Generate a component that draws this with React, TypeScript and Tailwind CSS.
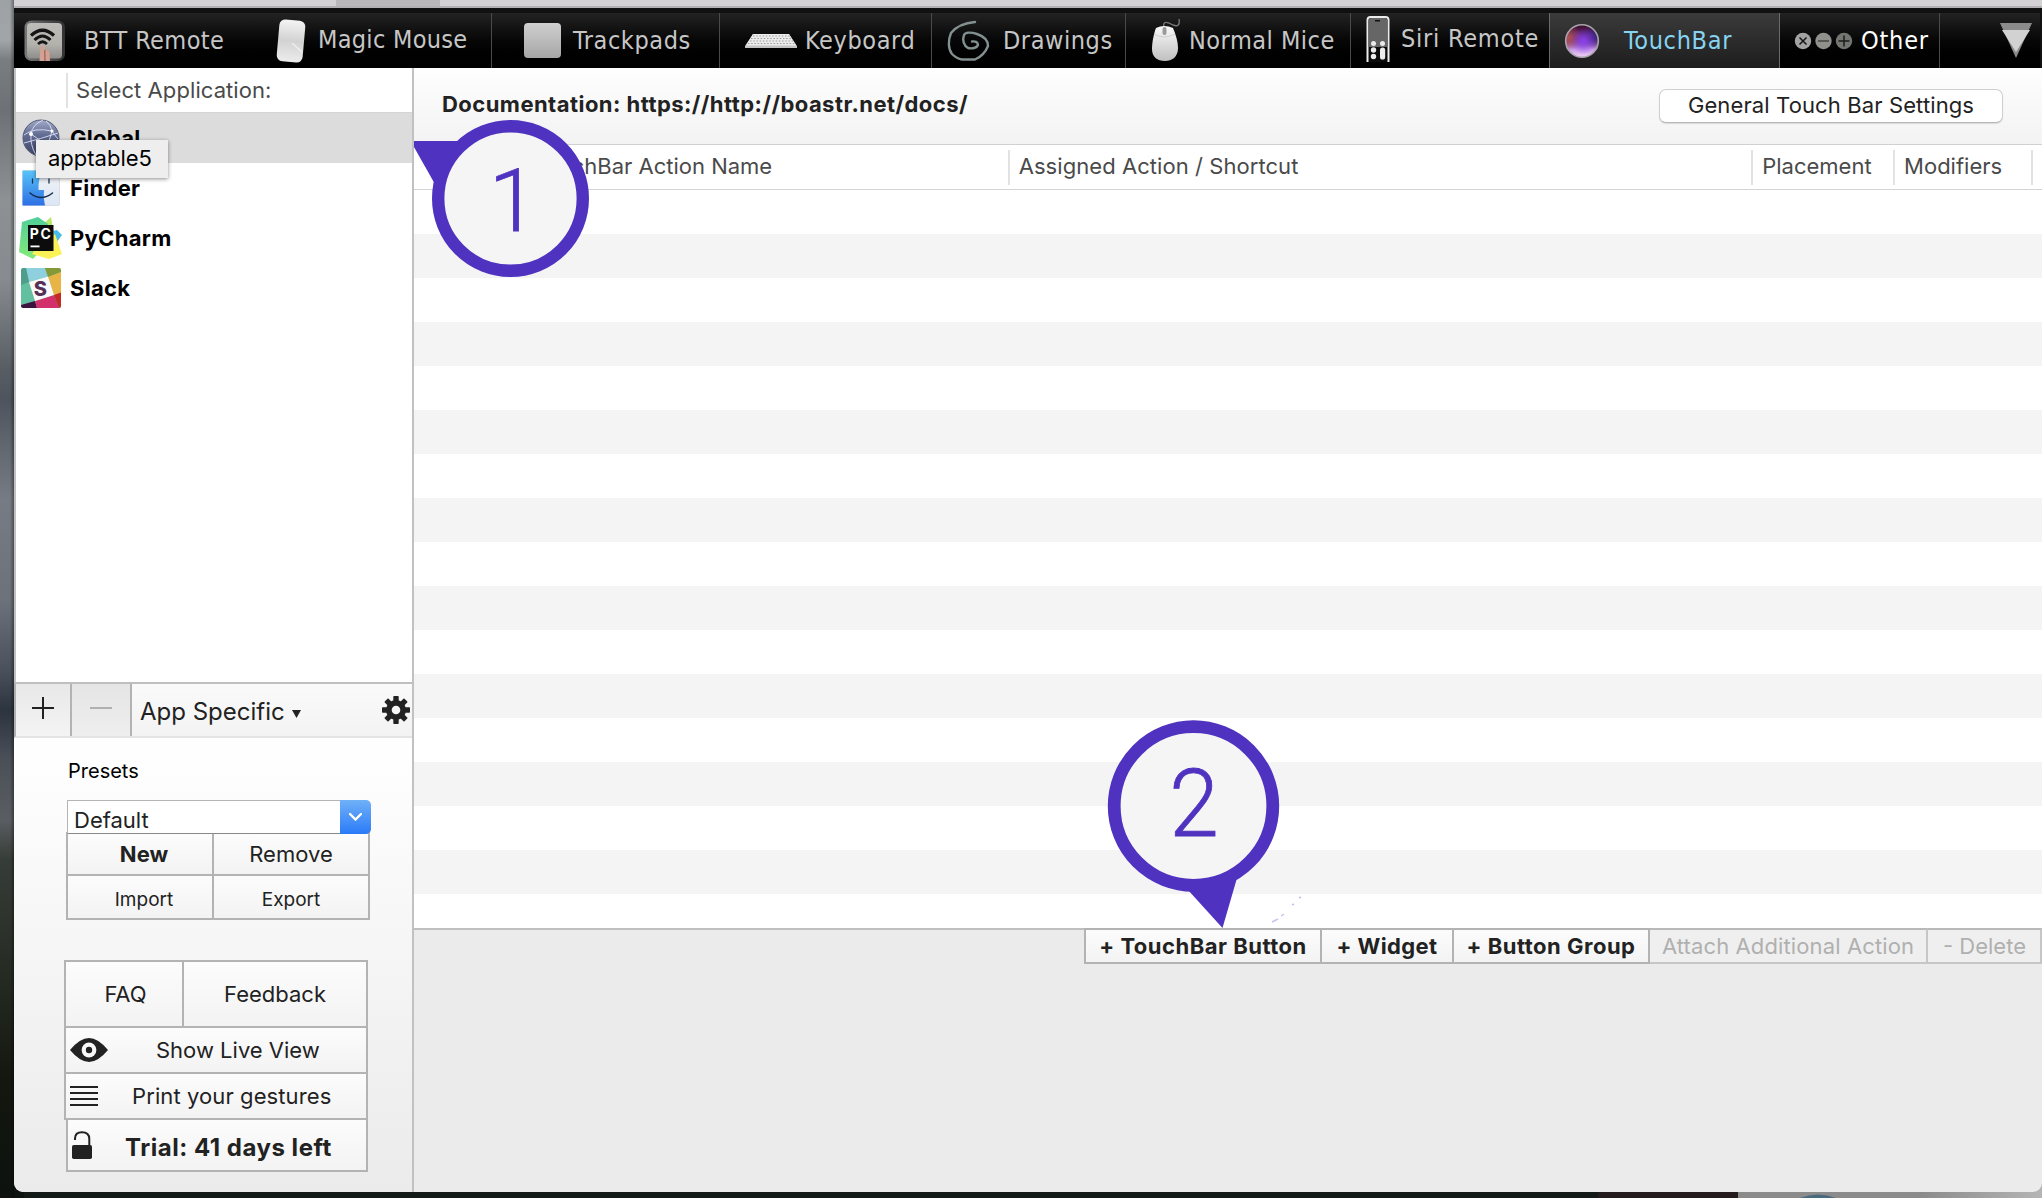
import type { ReactNode } from "react";

const sans = "font-['Inter','Liberation_Sans',sans-serif]";

function Tab({ children, className = "from-[#232323] to-black" }: { children: ReactNode; className?: string }) {
  return <div className={`flex shrink-0 items-center bg-linear-to-b ${className}`}>{children}</div>;
}

function RemoteIcon() {
  return (
    <svg width="42" height="42" viewBox="0 0 42 42" className="shrink-0">
      <defs>
        <linearGradient id="rm" x1="0" y1="0" x2="0" y2="1">
          <stop offset="0" stopColor="#bdbcb8" />
          <stop offset="0.600" stopColor="#b3b2ad" />
          <stop offset="1" stopColor="#8e8d89" />
        </linearGradient>
        <linearGradient id="rf" x1="0" y1="0" x2="1" y2="0">
          <stop offset="0" stopColor="#77787a" />
          <stop offset="1" stopColor="#303133" />
        </linearGradient>
      </defs>
      <rect x="0.500" y="0.500" width="40.500" height="40.500" rx="7" fill="url(#rf)" />
      <rect x="3" y="3" width="35" height="35.500" rx="4" fill="url(#rm)" />
      <g fill="none" stroke="#151515">
        <path d="M7 15.500 Q18.500 5 30 15.500" strokeWidth="3.200" />
        <path d="M10.500 20 Q18.500 12 26.500 20" strokeWidth="3" />
        <path d="M14 24 Q18.500 19.500 23 24" strokeWidth="2.600" />
      </g>
      <path d="M15.500 41 L16.500 27 q2-3 4 0 L21 31 q3-2.500 4.500 1 L26 41 Z" fill="#d3a193" />
      <path d="M20.800 30 L21 41" stroke="#8c5347" strokeWidth="1" />
    </svg>
  );
}

function MagicMouseIcon() {
  return (
    <svg width="32" height="46" viewBox="0 0 32 46" className="shrink-0">
      <defs>
        <linearGradient id="mm" x1="0" y1="0" x2="0" y2="1">
          <stop offset="0" stopColor="#f4f4f4" />
          <stop offset="0.500" stopColor="#d2d2d2" />
          <stop offset="1" stopColor="#ececec" />
        </linearGradient>
      </defs>
      <rect x="3" y="2" width="26" height="42" rx="6" fill="url(#mm)" transform="rotate(5 16 23)" />
      <path d="M17 25 L27 34" stroke="#f6efec" strokeWidth="1.500" opacity="0.900" />
    </svg>
  );
}

function KeyboardIcon() {
  return (
    <svg width="52" height="16" viewBox="0 0 52 16" className="shrink-0">
      <path d="M8 1 H44 L52 13 V15 H0 V13 Z" fill="#c4c4c4" />
      <path d="M8 1 H44 L51 12.500 H1 Z" fill="#ececec" />
      <path d="M8 3 H45 M6 5.500 H46.500 M5 8 H48 M3 10.500 H49.500" stroke="#9a9a9a" strokeWidth="1" strokeDasharray="1.500 1.700" />
    </svg>
  );
}

function SpiralIcon() {
  return (
    <svg width="44" height="42" viewBox="0 0 44 42" className="shrink-0" fill="none" stroke="#82908f" strokeWidth="2.400" strokeLinecap="round" strokeLinejoin="round">
      <path d="M29 2 C17 3 9 8 5 13 C2 20 2 29 6 34 C10 38 12 39 16 39.500 L29 39.500 C35 37 40 31 42 26 C42 20 37 16 31 14 C25 12 19 12 18 15 C16 20 18 26 22 28 C26 29 31 28 32 25 C32 22 29 21 26 21.500" />
    </svg>
  );
}

function MouseIcon() {
  return (
    <svg width="30" height="46" viewBox="0 0 30 46" className="shrink-0">
      <defs>
        <linearGradient id="nm" x1="0" y1="0" x2="0" y2="1">
          <stop offset="0" stopColor="#fafafa" />
          <stop offset="1" stopColor="#c0c0c0" />
        </linearGradient>
      </defs>
      <path d="M13 10 C11 2 17 4 22 7 C27 9 29 7 28 1" fill="none" stroke="#777" strokeWidth="1.400" />
      <path d="M5 10 Q13 6 22 10 C25 17 27 24 27 30 C27 39 21 43 14 43 C6 43 1 39 1 31 C1 24 3 15 5 10 Z" fill="url(#nm)" />
      <path d="M3 16 Q13 22 24 16" fill="none" stroke="#cfcfcf" strokeWidth="1" />
      <rect x="11.500" y="9" width="4" height="8" rx="2" fill="#9a9a9a" />
    </svg>
  );
}

function SiriIcon() {
  return (
    <svg width="24" height="46" viewBox="0 0 24 46" className="mb-[3px] shrink-0">
      <path d="M1.500 46 V4 Q1.500 1 4.500 1 H19.500 Q22.500 1 22.500 4 V46" fill="#0b0b0b" stroke="#ececec" strokeWidth="2" />
      <path d="M2.500 31 V4 Q2.500 2 5 2 H19 Q21.500 2 21.500 4 V31 Z" fill="#666" />
      <rect x="9" y="4" width="5" height="1.500" fill="#111" />
      <g fill="#ececec">
        <circle cx="7.500" cy="27.500" r="2.500" />
        <circle cx="16.500" cy="27.500" r="2.500" />
        <circle cx="7.500" cy="34" r="2.700" />
        <circle cx="7.500" cy="40.500" r="2.700" />
        <rect x="14" y="31.500" width="5.200" height="12" rx="2.600" />
      </g>
    </svg>
  );
}

function OrbIcon() {
  return (
    <svg width="36" height="36" viewBox="0 0 36 36" className="shrink-0">
      <defs>
        <linearGradient id="ob" x1="0" y1="0" x2="0" y2="1">
          <stop offset="0" stopColor="#3a0f2c" />
          <stop offset="0.450" stopColor="#6a2a78" />
          <stop offset="0.750" stopColor="#c79ae8" />
          <stop offset="1" stopColor="#f0d4f4" />
        </linearGradient>
        <radialGradient id="ob2" cx="0.550" cy="0.500" r="0.400">
          <stop offset="0" stopColor="#8a3ff0" />
          <stop offset="1" stopColor="#8a3ff0" stopOpacity="0" />
        </radialGradient>
        <radialGradient id="ob3" cx="0.100" cy="0.400" r="0.400">
          <stop offset="0" stopColor="#b0524e" />
          <stop offset="1" stopColor="#b0524e" stopOpacity="0" />
        </radialGradient>
        <radialGradient id="ob4" cx="0.900" cy="0.350" r="0.400">
          <stop offset="0" stopColor="#3b2680" />
          <stop offset="1" stopColor="#3b2680" stopOpacity="0" />
        </radialGradient>
      </defs>
      <circle cx="18" cy="18" r="16.300" fill="url(#ob)" />
      <circle cx="18" cy="18" r="16.300" fill="url(#ob3)" />
      <circle cx="18" cy="18" r="16.300" fill="url(#ob4)" />
      <circle cx="18" cy="18" r="16.300" fill="url(#ob2)" stroke="#a9a3ab" strokeWidth="1.600" />
    </svg>
  );
}

function OtherIcon() {
  return (
    <svg width="60" height="18" viewBox="0 0 60 18" className="shrink-0">
      <circle cx="9" cy="9" r="8.200" fill="#a3a3a3" />
      <circle cx="29.500" cy="9" r="8.200" fill="#90908c" />
      <circle cx="50" cy="9" r="8.200" fill="#747672" />
      <path d="M5.500 5.500 l7 7 m0-7 l-7 7" stroke="#151515" strokeWidth="1.500" />
      <path d="M24 9 h11" stroke="#44443f" strokeWidth="1.500" />
      <path d="M44.500 9 h11 M50 3.500 v11" stroke="#1d1d1b" strokeWidth="1.500" />
    </svg>
  );
}

function GlobeIcon() {
  return (
    <svg width="38" height="38" viewBox="0 0 38 38" className="shrink-0">
      <defs>
        <linearGradient id="gl" x1="0" y1="0" x2="0" y2="1">
          <stop offset="0" stopColor="#a3abc8" />
          <stop offset="0.400" stopColor="#646d94" />
          <stop offset="1" stopColor="#3d4565" />
        </linearGradient>
      </defs>
      <circle cx="19" cy="19" r="18" fill="url(#gl)" stroke="#555b74" strokeWidth="1" />
      <path
        d="M2 16 Q12 8 30 12 Q34 18 36 20 M9 15 Q8 26 14 36 M21 1 Q10 6 9 15 Q18 20 28 31 M30 12 Q28 24 20 36 M24 2 Q29 6 30 12 M2 24 Q18 20 36 14"
        fill="none"
        stroke="#dfe6fb"
        strokeWidth="1"
        opacity="0.850"
      />
      <circle cx="9" cy="15" r="2" fill="#fff" />
      <circle cx="30" cy="12" r="1.600" fill="#fff" />
    </svg>
  );
}

function FinderIcon() {
  return (
    <svg width="38" height="36" viewBox="0 0 38 36" className="shrink-0">
      <defs>
        <linearGradient id="fb" x1="0" y1="0" x2="0" y2="1">
          <stop offset="0" stopColor="#58c4f8" />
          <stop offset="1" stopColor="#2e6fe4" />
        </linearGradient>
        <linearGradient id="fw" x1="0" y1="0" x2="0" y2="1">
          <stop offset="0" stopColor="#f2f4f7" />
          <stop offset="1" stopColor="#dce6f4" />
        </linearGradient>
      </defs>
      <rect x="0.500" y="0.500" width="37" height="35" rx="1.500" fill="url(#fw)" stroke="#c8cfd8" strokeWidth="0.600" />
      <path d="M0.500 0.500 H20 Q16 10 16.500 20 H22 Q21 28 23 35.500 H0.500 Z" fill="url(#fb)" />
      <path d="M10.500 9 v4 M27 9 v4" stroke="#16324f" strokeWidth="1.300" strokeLinecap="round" />
      <path d="M8 23 Q19 32 30.500 23" fill="none" stroke="#142c48" strokeWidth="1.500" strokeLinecap="round" />
    </svg>
  );
}

function PyCharmIcon() {
  return (
    <svg width="44" height="44" viewBox="0 0 44 44" className="shrink-0">
      <defs>
        <linearGradient id="py" x1="0" y1="0" x2="0" y2="1">
          <stop offset="0" stopColor="#4fcf98" />
          <stop offset="1" stopColor="#86e87a" />
        </linearGradient>
      </defs>
      <path d="M30 16 L38 14 L43 19 L38 26 L28 24 Z" fill="#48bdea" />
      <path d="M22 10 L32 1 L35 18 L24 20 Z" fill="#b5ea68" />
      <path d="M3 6 L19 1 L29 8 L26 30 L14 43 L0 36 Z" fill="url(#py)" />
      <path d="M36 18 L43 38 L30 43 L13 38 L20 28 Z" fill="#fbf257" />
      <rect x="9" y="9" width="25.500" height="26" fill="#0c0c0c" />
      <rect x="11.500" y="29.500" width="9" height="1.800" fill="#fff" />
      <text x="10.800" y="22.500" fontSize="14" fontWeight="700" fill="#fff" fontFamily="Inter, sans-serif" textLength="21">PC</text>
    </svg>
  );
}

function SlackIcon() {
  return (
    <svg width="40" height="40" viewBox="0 0 40 40" className="shrink-0">
      <defs>
        <clipPath id="sl"><rect width="40" height="40" rx="2.500" /></clipPath>
      </defs>
      <g clipPath="url(#sl)">
        <rect width="40" height="40" fill="#62bfa0" />
        <path d="M5 0 H24 L28 8 L8 14 Z" fill="#8ed0dd" />
        <path d="M0 0 H5 L8 14 L0 17 Z" fill="#4f9e8c" />
        <path d="M24 0 H40 V4 L27 9 Z" fill="#839a36" />
        <path d="M27 9 L40 4 V25 L33 28 Z" fill="#e7b445" />
        <path d="M0 37 L14 33 L16 40 H0 Z" fill="#3d1240" />
        <path d="M14 33 L33 27 L38 40 H16 Z" fill="#d3316b" />
        <path d="M33 27 L40 24.500 V40 H38 Z" fill="#c32b25" />
        <path d="M8 14 L27 8.500 L33 27 L14 33 Z" fill="#fbfafa" />
      </g>
      <text x="12.800" y="27.500" fontSize="20" fontWeight="800" fill="#553057" fontFamily="Inter, sans-serif">S</text>
    </svg>
  );
}

function GearIcon() {
  return (
    <svg width="28" height="28" viewBox="0 0 28 28" className="shrink-0">
      <g fill="#222">
        {[0, 45, 90, 135].map((a) => (
          <rect key={a} x="11.300" y="0" width="5.400" height="28" rx="0.800" transform={`rotate(${a} 14 14)`} />
        ))}
        <circle cx="14" cy="14" r="10" />
      </g>
      <circle cx="14" cy="14" r="4.300" fill="#f6f6f6" />
    </svg>
  );
}

function EyeIcon() {
  return (
    <svg width="38" height="24" viewBox="0 0 38 24" className="shrink-0">
      <path d="M0 12 Q10 0 19 0 Q28 0 38 12 Q28 24 19 24 Q10 24 0 12 Z" fill="#222" />
      <circle cx="19" cy="12" r="7.400" fill="#f8f8f8" />
      <circle cx="19" cy="12" r="3.200" fill="#222" />
    </svg>
  );
}

function LockIcon() {
  return (
    <svg width="20" height="28" viewBox="0 0 20 28" className="shrink-0">
      <path d="M3 9 V7.500 Q3 1.300 10 1.300 Q17.300 1.300 17.300 8 V15" fill="none" stroke="#222" strokeWidth="2" />
      <rect y="14" width="20" height="14" rx="1.800" fill="#222" />
    </svg>
  );
}

const cell = "bg-linear-to-b from-[#fcfcfc] to-[#f3f3f3] flex items-center border-[#b3b3b3]";

function AppRow({ icon, name, className = "" }: { icon: ReactNode; name: string; className?: string }) {
  return (
    <div className={`flex h-[50px] items-center ${className}`}>
      <div className="flex w-[50px] shrink-0 justify-center">{icon}</div>
      <span className="ml-[4px] text-[22px] font-bold tracking-[0.3px] text-black">{name}</span>
    </div>
  );
}

function Sidebar() {
  return (
    <div className="flex w-[400px] shrink-0 flex-col border-r-2 border-[#c1c1c1]">
      <div className="flex h-[614px] flex-col border-l-2 border-[#c1c1c1] bg-white">
        <div className="flex h-[45px] items-center border-b border-[#d4d4d4]">
          <div className="ml-[50px] h-[35px] w-[2px] bg-[#e2e2e2]" />
          <span className="ml-[8px] text-[22px] tracking-[0.08px] text-[#4a4a4a]">Select Application:</span>
        </div>
        <AppRow icon={<GlobeIcon />} name="Global" className="bg-[#dcdcdc]" />
        <AppRow icon={<FinderIcon />} name="Finder" />
        <AppRow icon={<PyCharmIcon />} name="PyCharm" />
        <AppRow icon={<SlackIcon />} name="Slack" />
      </div>
      <div className="flex h-[56px] shrink-0 border-y-2 border-l-2 border-t-[#bfbfbf] border-b-[#e4e4e4] border-l-[#b0b0b0] bg-linear-to-b from-[#fafafa] to-[#f3f3f3]">
        <div className="flex w-[56px] justify-center border-r-2 border-[#b3b3b3] bg-linear-to-b from-[#e8e8e8] to-[#f4f4f4] pt-[13px]">
          <svg width="22" height="22" viewBox="0 0 22 22"><path d="M0 11 H22 M11 0 V22" stroke="#222" strokeWidth="2" /></svg>
        </div>
        <div className="flex w-[60px] justify-center border-r-2 border-[#b3b3b3] bg-linear-to-b from-[#e5e5e5] to-[#eee] pt-[13px]">
          <svg width="22" height="22" viewBox="0 0 22 22"><path d="M0 11 H22" stroke="#b0b0b0" strokeWidth="2" /></svg>
        </div>
        <span className="ml-[8px] mt-[4px] self-center text-[24px] text-[#222]">App Specific</span>
        <svg width="9" height="8" viewBox="0 0 9 8" className="ml-[7px] mt-[26px]"><path d="M0 0 H9 L4.500 8 Z" fill="#222" /></svg>
        <div className="ml-auto mr-[2px] mt-[12px]"><GearIcon /></div>
      </div>
      <div className="flex flex-1 flex-col rounded-bl-[9px] bg-linear-to-b from-white to-[#ebebeb]">
        <span className="ml-[54px] mt-[18px] text-[20px] leading-[30px] text-black">Presets</span>
        <div className="relative z-10 ml-[53px] mt-[14px] flex h-[34px] w-[304px]">
          <div className="flex flex-1 items-center border border-r-0 border-[#b5b5b5] border-b-[#8a8a8a] bg-white pl-[6px] pt-[5px]">
            <span className="text-[22px] leading-[26px] text-[#222]">Default</span>
          </div>
          <div className="flex w-[31px] items-center justify-center rounded-r-[5px] bg-linear-to-b from-[#6fb0f7] to-[#2a7af8]">
            <svg width="13" height="8" viewBox="0 0 13 8"><path d="M1 1 L6.500 6.500 L12 1" fill="none" stroke="#fff" strokeWidth="2.400" strokeLinecap="round" /></svg>
          </div>
        </div>
        <div className="-mt-[2px] ml-[52px] grid h-[88px] w-[304px] grid-cols-[148px_156px] grid-rows-[44px_44px] text-[#222]">
          <div className={`${cell} justify-center border-2 pl-[8px] text-[22px] font-bold`}>New</div>
          <div className={`${cell} justify-center border-2 border-l-0 text-[22px]`}>Remove</div>
          <div className={`${cell} justify-center border-2 border-t-0 pl-[8px] pt-[7px] text-[19px]`}>Import</div>
          <div className={`${cell} justify-center border-2 border-l-0 border-t-0 pt-[7px] text-[19px]`}>Export</div>
        </div>
        <div className="ml-[50px] mt-[40px] flex h-[212px] w-[304px] flex-col text-[22px] text-[#222]">
          <div className="flex h-[68px]">
            <div className={`${cell} w-[120px] justify-center border-2 pl-[3px]`}>FAQ</div>
            <div className={`${cell} flex-1 justify-center border-2 border-l-0`}>Feedback</div>
          </div>
          <div className={`${cell} h-[46px] border-2 border-t-0 pl-[4px]`}>
            <EyeIcon />
            <span className="ml-[48px]">Show Live View</span>
          </div>
          <div className={`${cell} h-[46px] border-2 border-t-0 pl-[4px]`}>
            <svg width="28" height="20" viewBox="0 0 28 20"><path d="M0 1 H28 M0 7 H28 M0 13 H28 M0 19 H28" stroke="#222" strokeWidth="2" /></svg>
            <span className="ml-[34px] tracking-[0.1px]">Print your gestures</span>
          </div>
          <div className={`${cell} ml-[2px] h-[52px] border-2 border-t-0 pl-[4px]`}>
            <LockIcon />
            <span className="ml-[33px] mt-[5px] text-[24px] font-bold tracking-[0.52px]">Trial: 41 days left</span>
          </div>
        </div>
      </div>
    </div>
  );
}

function Main() {
  const col = "flex items-center border-l-2 border-[#e2e2e2] h-[35px] pl-[9px] pb-[2px] text-[22px] text-[#4a4a4a]";
  const act = "flex h-[36px] items-center border-y-2 border-r-2 text-[22px]";
  const on = "justify-center border-[#b3b3b3] bg-linear-to-b from-[#fcfcfc] to-[#f3f3f3] font-bold text-[#222]";
  const off = "border-[#c6c6c6] border-t-[#b8b8b8] bg-[#efefef] text-[#b0b0b0]";
  return (
    <div className="flex min-w-0 flex-1 flex-col">
      <div className="flex h-[77px] shrink-0 items-center border-b border-[#d1d1d1] bg-linear-to-b from-[#fefefe] to-[#f3f3f3]">
        <span className="mb-[4px] ml-[28px] text-[22px] font-bold tracking-[0.46px] text-[#222]">Documentation: https://http://boastr.net/docs/</span>
        <div className="mb-[1px] ml-auto mr-[39px] flex h-[34px] w-[344px] items-center justify-center rounded-[7px] border border-[#cfcfcf] border-b-[#b8b8b8] bg-white text-[22px] tracking-[0.12px] text-[#222] shadow-[0_1px_1px_rgba(0,0,0,0.12)]">
          General Touch Bar Settings
        </div>
      </div>
      <div className="flex h-[45px] shrink-0 items-center border-b border-[#d4d4d4] bg-white">
        <span className="ml-[119px] w-[475px] pb-[2px] text-[22px] text-[#4a4a4a]">TouchBar Action Name</span>
        <div className={`${col} w-[744px]`}><span className="tracking-[0.06px]">Assigned Action / Shortcut</span></div>
        <div className={`${col} w-[142px]`}>Placement</div>
        <div className={`${col} w-[138px]`}>Modifiers</div>
        <div className={`${col} w-[10px]`} />
      </div>
      <div className="flex h-[740px] shrink-0 flex-col overflow-hidden border-b-2 border-[#bfbfbf]">
        {Array.from({ length: 17 }, (_, i) => (
          <div key={i} className={`h-[44px] shrink-0 ${i % 2 ? "bg-[#f4f4f4]" : "bg-white"}`} />
        ))}
      </div>
      <div className="relative -mt-[2px] ml-[670px] flex h-[36px]">
        <div className={`${act} ${on} w-[238px] border-l-2 tracking-[0.5px]`}>+ TouchBar Button</div>
        <div className={`${act} ${on} w-[132px] tracking-[0.4px]`}>+ Widget</div>
        <div className={`${act} ${on} w-[196px] tracking-[0.5px]`}>+ Button Group</div>
        <div className={`${act} ${off} w-[278px] justify-center tracking-[0.12px]`}>Attach Additional Action</div>
        <div className={`${act} ${off} flex-1 border-r-0 pl-[15px]`}>- Delete</div>
      </div>
    </div>
  );
}

export default function App() {
  return (
    <div className={`relative h-[1198px] w-[2042px] overflow-hidden whitespace-nowrap bg-[#131916] ${sans}`}>
      <div className="absolute inset-y-0 left-0 w-[24px] bg-[linear-gradient(to_bottom,#9da1a3_0px,#a3a6a8_40px,#7a7d80_60px,#6d7175_110px,#8d9194_200px,#878b8f_280px,#585d64_370px,#4e545d_400px,#777c84_500px,#6c717a_600px,#4a515c_670px,#2c343f_710px,#4b5058_760px,#5a5d62_820px,#363c37_860px,#2b302a_940px,#1f241c_1010px,#13170f_1080px,#0e120f_1198px)]" />
      <div className="absolute inset-y-0 left-[10px] w-[4px] bg-linear-to-r from-transparent to-black/35" />
      <div className="absolute bottom-0 right-0 flex h-[20px] w-[444px]">
        <div className="w-[140px] bg-[#241c1c]" />
        <div className="flex flex-1 items-end bg-linear-to-r from-[#8b8b8b] from-60% to-[#b5b5b5] pl-[62px]">
          <svg width="36" height="4" viewBox="0 0 36 4"><path d="M0 4 Q18 -3 36 4 Z" fill="#49697d" /></svg>
        </div>
      </div>
      <div className="relative ml-[14px] flex h-[1192px] flex-col overflow-hidden rounded-b-[9px] bg-[#ebebeb]">
        <div className="flex h-[8px] shrink-0 border-b-2 border-[#b2b0b2] bg-[#d3d1d4]">
          <div className="ml-[322px] w-[104px] bg-[#bbb8bb]" />
        </div>
        <div className="flex h-[60px] shrink-0 bg-[#111] pr-[2px] pt-[5px] font-['DejaVu_Sans_Condensed','DejaVu_Sans',sans-serif] text-[25px] tracking-[0.4px] text-[#c6c6c6]">
          <Tab className="w-[236px] from-[#232323] to-black pl-[10px]"><RemoteIcon /><span className="ml-[18px]">BTT Remote</span></Tab>
          <Tab className="w-[242px] border-r border-[#4a4a4a] from-[#232323] to-black pl-[25px]"><MagicMouseIcon /><span className="mb-[2px] ml-[11px] tracking-[0.3px]">Magic Mouse</span></Tab>
          <Tab className="w-[228px] border-r border-[#4a4a4a] from-[#232323] to-black pl-[32px]"><div className="h-[35px] w-[37px] rounded-[4px] bg-linear-to-b from-[#d0d0d0] to-[#a6a6a6]" /><span className="ml-[12px] tracking-[0.6px]">Trackpads</span></Tab>
          <Tab className="w-[212px] border-r border-[#4a4a4a] from-[#232323] to-black pl-[25px]"><KeyboardIcon /><span className="ml-[8px] tracking-[0.6px]">Keyboard</span></Tab>
          <Tab className="w-[194px] border-r border-[#4a4a4a] from-[#232323] to-black pl-[14px]"><SpiralIcon /><span className="ml-[13px] tracking-[0.55px]">Drawings</span></Tab>
          <Tab className="w-[225px] border-r border-[#4a4a4a] from-[#232323] to-black pl-[25px]"><MouseIcon /><span className="ml-[8px] tracking-[0.5px]">Normal Mice</span></Tab>
          <Tab className="w-[199px] border-r border-[#6a6a6a] from-[#232323] to-black pl-[15px]"><SiriIcon /><span className="mb-[3px] ml-[11px] tracking-[0.75px]">Siri Remote</span></Tab>
          <Tab className="w-[230px] border-r border-[#6a6a6a] from-[#3b3b3b] to-[#1d1d1d] pl-[14px] text-[#86d4f0]"><OrbIcon /><span className="ml-[24px] tracking-[0.7px]">TouchBar</span></Tab>
          <Tab className="w-[160px] border-r border-[#4a4a4a] from-[#232323] to-black pl-[14px] text-white"><OtherIcon /><span className="ml-[7px] tracking-[0.8px]">Other</span></Tab>
          <Tab className="flex-1 justify-end from-[#232323] to-black pr-[8px]">
            <svg width="32" height="36" viewBox="0 0 32 36"><path d="M0 0 H32 L16 35 Z" fill="#8b8b8b" /><path d="M2 7 H30 L16 29 Z" fill="#d2d2d2" /></svg>
          </Tab>
        </div>
        <div className="flex min-h-0 flex-1"><Sidebar /><Main /></div>
      </div>

      <svg width="176" height="158" viewBox="0 0 176 158" className="absolute left-[414px] top-[120px]">
        <path d="M0 21 H50 L22 66 L0 27 Z" fill="#4f32c0" />
        <circle cx="96.500" cy="78.500" r="72.300" fill="#f5f5f5" stroke="#4f32c0" strokeWidth="12.400" />
        <text x="75" y="111" fontSize="87" fontWeight="300" fill="#4f32c0" stroke="#4f32c0" strokeWidth="0.800" fontFamily="Roboto, sans-serif">1</text>
      </svg>
      <svg width="200" height="210" viewBox="0 0 200 210" className="absolute left-[1106px] top-[720px]">
        <path d="M82 170 L131 158 L116.500 208 Z" fill="#4f32c0" />
        <circle cx="87.500" cy="86" r="79.300" fill="#f5f5f5" stroke="#4f32c0" strokeWidth="12.800" />
        <text transform="translate(88 116) scale(0.940 1)" textAnchor="middle" fontSize="95" fontWeight="300" fill="#4f32c0" stroke="#4f32c0" strokeWidth="0.800" fontFamily="Roboto, sans-serif">2</text>
        <path d="M166 202 L172 199 M175 196 L178 194 M186 185 L188 184 M193 178 L195 177" stroke="#c9c2ea" strokeWidth="1.500" />
      </svg>
      <div className="absolute left-[36px] top-[140px] flex h-[38px] w-[132px] items-center bg-[#eee] pb-[2px] pl-[12px] text-[22px] text-black shadow-[0_1px_4px_rgba(0,0,0,0.45)]">
        apptable5
      </div>
    </div>
  );
}
